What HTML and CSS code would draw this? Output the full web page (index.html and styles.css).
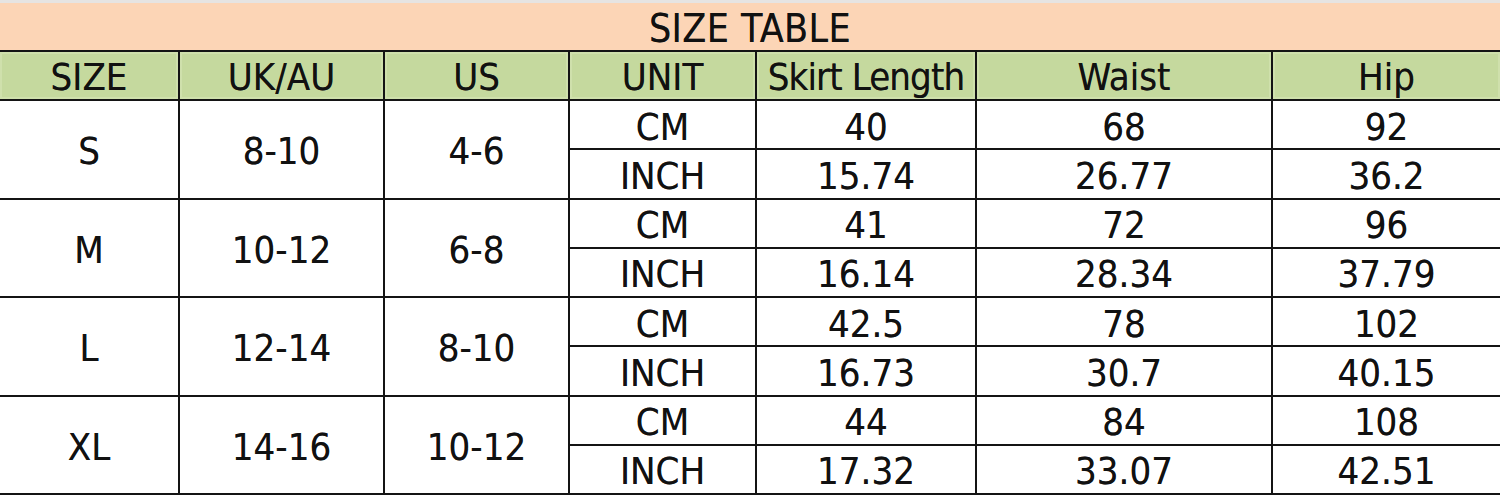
FILE: index.html
```html
<!DOCTYPE html>
<html>
<head>
<meta charset="utf-8">
<link rel="stylesheet" href="styles.css">
</head>
<body>
<div class="topband"></div>
<div class="sheet">
  <div class="cell title">SIZE TABLE</div>

  <div class="cell head">SIZE</div>
  <div class="cell head">UK/AU</div>
  <div class="cell head">US</div>
  <div class="cell head">UNIT</div>
  <div class="cell head tight">Skirt Length</div>
  <div class="cell head">Waist</div>
  <div class="cell head">Hip</div>

  <div class="cell span2">S</div>
  <div class="cell span2">8-10</div>
  <div class="cell span2">4-6</div>
  <div class="cell">CM</div><div class="cell">40</div><div class="cell">68</div><div class="cell">92</div>
  <div class="cell">INCH</div><div class="cell">15.74</div><div class="cell">26.77</div><div class="cell">36.2</div>

  <div class="cell span2">M</div>
  <div class="cell span2">10-12</div>
  <div class="cell span2">6-8</div>
  <div class="cell">CM</div><div class="cell">41</div><div class="cell">72</div><div class="cell">96</div>
  <div class="cell">INCH</div><div class="cell">16.14</div><div class="cell">28.34</div><div class="cell">37.79</div>

  <div class="cell span2">L</div>
  <div class="cell span2">12-14</div>
  <div class="cell span2">8-10</div>
  <div class="cell">CM</div><div class="cell">42.5</div><div class="cell">78</div><div class="cell">102</div>
  <div class="cell">INCH</div><div class="cell">16.73</div><div class="cell">30.7</div><div class="cell">40.15</div>

  <div class="cell span2">XL</div>
  <div class="cell span2">14-16</div>
  <div class="cell span2">10-12</div>
  <div class="cell">CM</div><div class="cell">44</div><div class="cell">84</div><div class="cell">108</div>
  <div class="cell">INCH</div><div class="cell">17.32</div><div class="cell">33.07</div><div class="cell">42.51</div>
</div>
</body>
</html>
```

FILE: styles.css
```css
html, body {
  margin: 0;
  padding: 0;
  background: #ffffff;
}

body {
  width: 1500px;
  height: 498px;
  overflow: hidden;
  font-family: "DejaVu Sans Condensed", "DejaVu Sans", sans-serif;
  font-stretch: condensed;
  color: #111111;
}

.topband {
  height: 3px;
  background: #e6e4e2;
}

.sheet {
  display: grid;
  grid-template-columns: 178px 203px 183px 185px 218px 294px 227px;
  grid-template-rows: 47px 47px repeat(8, 47.25px);
  gap: 2px;
  background: #141414;
  padding-bottom: 2px;
}

.cell {
  background: #ffffff;
  display: flex;
  align-items: center;
  justify-content: center;
  font-size: 38px;
  line-height: 1;
  white-space: nowrap;
  padding-top: 4px;
  text-shadow: 0 0 0.6px rgba(0, 0, 0, 0.6);
}

.title {
  grid-column: 1 / -1;
  background: #fcd5b6;
  font-size: 39px;
  padding-top: 3px;
  letter-spacing: 0.4px;
}

.head {
  background: #c5d99e;
  box-shadow: inset 0 0 0 2px #cfe0ac;
  padding-top: 3px;
}

.tight {
  letter-spacing: -0.9px;
}

.span2 {
  grid-row: span 2;
}
```
